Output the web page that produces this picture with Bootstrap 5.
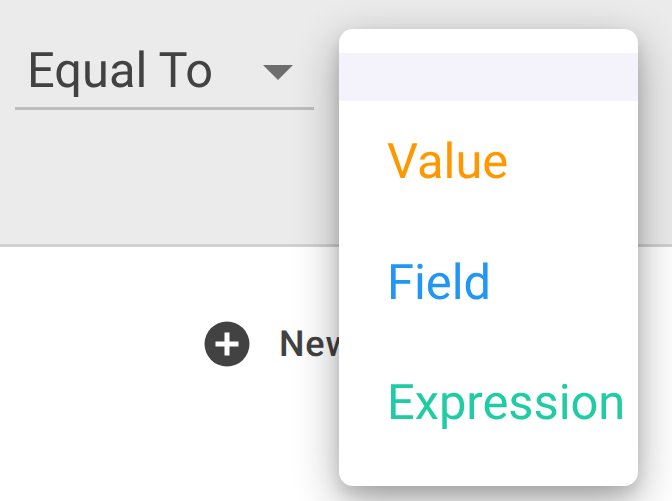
<!DOCTYPE html>
<html lang="en">
<head>
<meta charset="utf-8">
<title>Filter</title>
<link href="https://cdn.jsdelivr.net/npm/bootstrap@5.3.0/dist/css/bootstrap.min.css" rel="stylesheet">
<style>
html, body { height: 100%; }
body { font-family: Roboto, "Liberation Sans", sans-serif; background: #fff; overflow: hidden; text-rendering: geometricPrecision; }
.stage { height: 501px; }
.top-band { height: 247px; background: #ebebeb; border-bottom: 3px solid #d0d0d0; padding: 44px 0 0 15px; }
.op-select { width: 299px; height: 66px; border-bottom: 3px solid #bdbdbd; padding: 0 0 10px 12px; color: #424242; font-size: 48.8px; line-height: 52px; }
.op-caret { width: 0; height: 0; border-left: 15px solid transparent; border-right: 15px solid transparent; border-top: 15px solid #6e6e6e; margin-right: 21px; margin-top: 3px; }
.add-row { padding: 74px 0 0 204px; gap: 29px; color: #424242; font-size: 36px; font-weight: 500; line-height: 46px; letter-spacing: .8px; }
.value-menu { position: absolute; left: 339px; top: 29px; width: 299px; height: 457px; background: #fff; border-radius: 14px; padding-top: 24px; box-shadow: 0 15px 45px rgba(0,0,0,.33), 0 8px 15px rgba(0,0,0,.12); }
.menu-blank { height: 48px; background: #f4f3fc; }
.menu-opt { height: 120.5px; padding-left: 48px; font-size: 48.8px; line-height: 122px; white-space: nowrap; }
.opt-value { color: #ff9800; }
.opt-field { color: #2196f3; }
.opt-expr { color: #1fcca4; }
</style>
</head>
<body>
<div class="stage position-relative">
  <div class="top-band">
    <div class="op-select d-flex align-items-center justify-content-between">
      <span>Equal To</span>
      <span class="op-caret"></span>
    </div>
  </div>
  <div class="add-row d-flex align-items-center">
    <svg width="46" height="46" viewBox="0 0 46 46" aria-hidden="true"><circle cx="23" cy="23" r="22.5" fill="#424242"/><path d="M23 11.500V34.500M11.500 23H34.500" stroke="#fff" stroke-width="5" fill="none"/></svg>
    <span>New</span>
  </div>
  <div class="value-menu">
    <div class="menu-blank"></div>
    <div class="menu-opt opt-value">Value</div>
    <div class="menu-opt opt-field">Field</div>
    <div class="menu-opt opt-expr">Expression</div>
  </div>
</div>
<script src="https://cdn.jsdelivr.net/npm/bootstrap@5.3.0/dist/js/bootstrap.bundle.min.js"></script>
</body>
</html>
